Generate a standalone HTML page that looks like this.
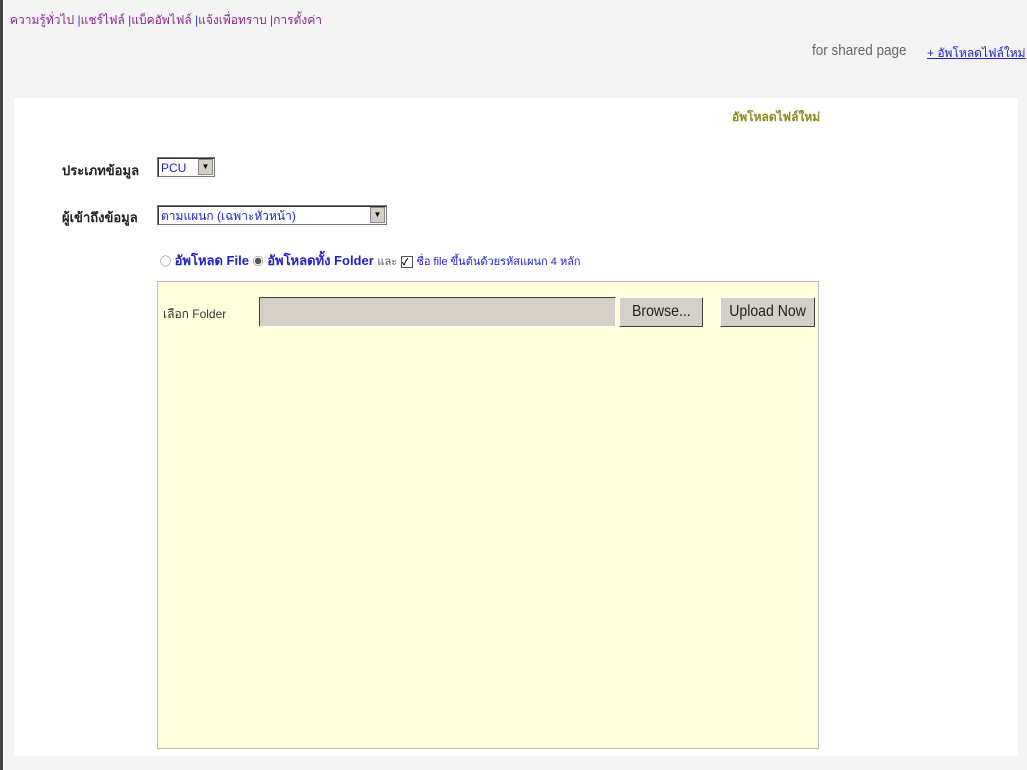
<!DOCTYPE html>
<html><head><meta charset="utf-8"><style>
body{margin:0;width:1027px;height:770px;background:#f4f4f4;font-family:"Liberation Sans","Noto Sans CJK SC",sans-serif;position:relative;overflow:hidden}
.lb{position:absolute;left:0;top:0;width:3px;height:770px;background:#444}
.a{position:absolute;white-space:nowrap}
.nav{left:10px;top:11px;font-size:12px;color:#8a2a8a}
.nav b{color:#3344cc;font-weight:normal}
.panel{position:absolute;left:14px;top:98px;width:1004px;height:658px;background:#fff}
.box{position:absolute;left:157px;top:281px;width:660px;height:466px;background:#ffffdc;border:1px solid #bbb}
.sel{position:absolute;background:#fff;border:1px solid #777;box-shadow:inset 1px 1px 0 #333;font-size:12px;color:#2222cc;height:20px;line-height:20px;padding-left:3px;box-sizing:border-box}
.arr{position:absolute;right:1px;top:1px;width:15px;height:16px;background:#d4d0c8;border:1px solid #888;box-sizing:border-box;font-size:8px;line-height:14px;text-align:center;color:#000}
.btn{position:absolute;background:#d4d0c8;border:1px solid;border-color:#fff #444 #444 #fff;font-size:16px;color:#222;text-align:center;line-height:28px;height:30px;box-sizing:border-box}
.btn span{display:inline-block;transform:scaleX(0.88)}
</style></head><body>
<div class="lb"></div>
<div class="a nav">ความรู้ทั่วไป <b>|</b>แชร์ไฟล์ <b>|</b>แบ็คอัพไฟล์ <b>|</b>แจ้งเพื่อทราบ <b>|</b>การตั้งค่า</div>
<div class="a" style="left:812px;top:42px;font-size:15px;color:#666;transform:scaleX(0.9);transform-origin:left">for shared page</div>
<div class="a" style="left:927px;top:44px;font-size:12px;color:#2222cc;text-decoration:underline">+ อัพโหลดไฟล์ใหม่</div>
<div class="panel"></div>
<div class="a" style="left:732px;top:108px;font-size:12px;color:#8a8a20;font-weight:bold">อัพโหลดไฟล์ใหม่</div>
<div class="a" style="left:62px;top:160px;font-size:13px;color:#222;font-weight:bold">ประเภทข้อมูล</div>
<div class="sel" style="left:157px;top:157px;width:58px">PCU<div class="arr">▼</div></div>
<div class="a" style="left:62px;top:207px;font-size:13px;color:#222;font-weight:bold">ผู้เข้าถึงข้อมูล</div>
<div class="sel" style="left:157px;top:205px;width:230px">ตามแผนก (เฉพาะหัวหน้า)<div class="arr">▼</div></div>
<div class="a" style="left:160px;top:250px;font-size:13px;color:#2222cc;font-weight:bold"><span style="color:#555;font-weight:normal;font-size:11px">◯</span> อัพโหลด File <span style="color:#555;font-weight:normal;font-size:11px">◉</span> อัพโหลดทั้ง Folder <span style="color:#555;font-weight:normal;font-size:11px">และ</span> <span style="display:inline-block;width:10px;height:10px;border:1px solid #555;background:#fff;font-size:9px;line-height:10px;color:#000;vertical-align:0">✓</span> <span style="font-weight:normal;font-size:11px">ชื่อ file ขึ้นต้นด้วยรหัสแผนก 4 หลัก</span></div>
<div class="box"></div>
<div class="a" style="left:163px;top:305px;font-size:12px;color:#333">เลือก Folder</div>
<div style="position:absolute;left:259px;top:297px;width:357px;height:30px;background:#d4d0c8;border:1px solid;border-color:#444 #fff #fff #444;box-sizing:border-box"></div>
<div class="btn" style="left:619px;top:297px;width:84px"><span>Browse...</span></div>
<div class="btn" style="left:720px;top:297px;width:95px"><span>Upload Now</span></div>
</body></html>
